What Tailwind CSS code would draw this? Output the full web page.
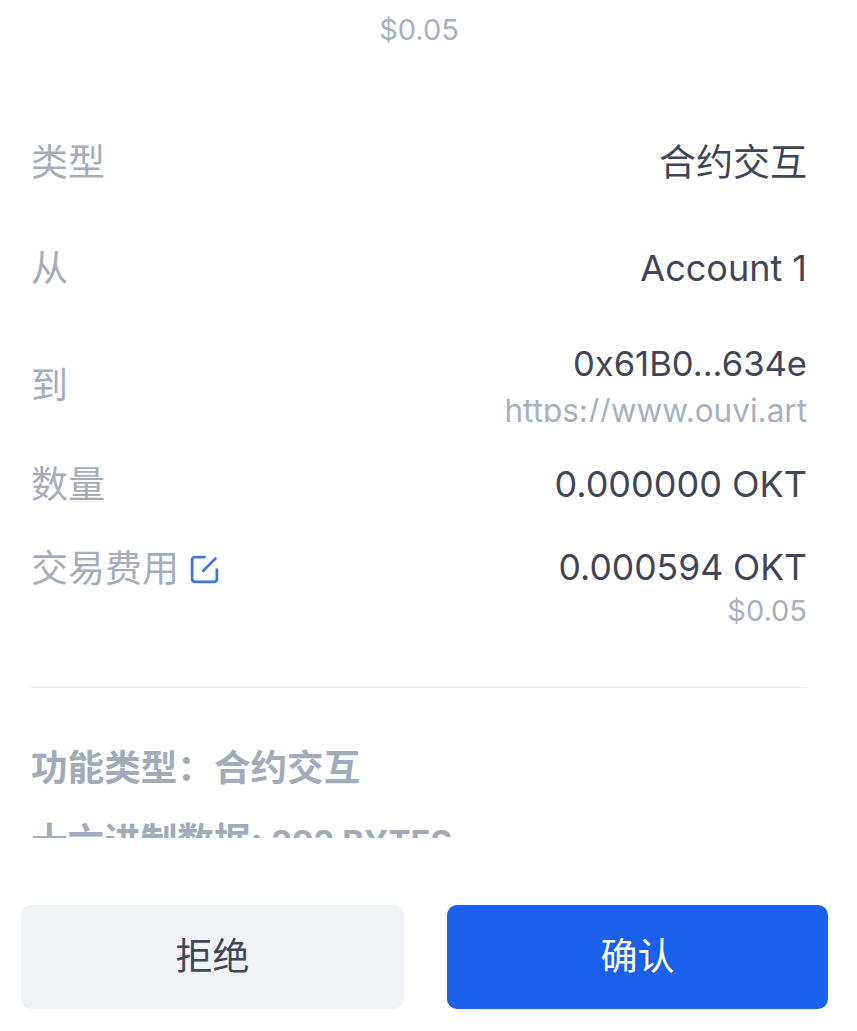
<!DOCTYPE html>
<html lang="en">
<head>
  <meta charset="UTF-8" />
  <title>确认交易</title>
  <script src="https://cdn.jsdelivr.net/npm/@tailwindcss/browser@4"></script>
</head>
<body class="bg-white">
  <div class="w-[857px] h-[1031px] overflow-hidden flex flex-col font-['Inter','Noto_Sans_CJK_SC',sans-serif]">
    <!-- scrolling area -->
    <div class="h-[838px] overflow-hidden pl-[31px] pr-[50px] shrink-0">
      <div class="h-[60px] flex items-center justify-center text-[29px] text-[#a9b1bf]">$0.05</div>

      <div class="mt-[78px] h-[105px] flex justify-between text-[37px] leading-[50px]">
        <span class="text-[#a6adba]">类型</span>
        <span class="text-[#3f4656]">合约交互</span>
      </div>
      <div class="h-[97px] flex justify-between leading-[50px]">
        <span class="mt-[1px] text-[37px] text-[#a6adba]">从</span>
        <span class="text-[36px] text-[#3f4656]">Account 1</span>
      </div>

      <div class="h-[119px] flex justify-between items-start">
        <span class="mt-[21px] text-[37px] leading-[50px] text-[#a6adba]">到</span>
        <div class="flex flex-col items-end">
          <span class="text-[34.6px] leading-[46px] text-[#3f4656]">0x61B0...634e</span>
          <span class="text-[31.5px] leading-[50px] h-[36px] overflow-hidden text-[#a9b1bf]">https://www.ouvi.art</span>
        </div>
      </div>

      <div class="h-[84px] flex justify-between leading-[50px]">
        <span class="mt-[1px] text-[37px] text-[#a6adba]">数量</span>
        <span class="text-[36px] text-[#3f4656]">0.000000 OKT</span>
      </div>

      <div class="h-[145px] flex justify-between border-b border-[#e8ebef]">
        <div class="flex items-center gap-[9px] h-[50px]">
          <span class="mt-[1px] text-[37px] text-[#a6adba]">交易费用</span>
          <svg class="w-[33px] h-[33px] mt-[3px]" viewBox="0 0 24 24" fill="none" stroke="#3f75dc" stroke-width="2" stroke-linecap="round" stroke-linejoin="round">
            <path d="M12 3H5a2 2 0 0 0-2 2v14a2 2 0 0 0 2 2h14a2 2 0 0 0 2-2v-7" />
            <path d="M20 4l-9 9" />
          </svg>
        </div>
        <div class="flex flex-col items-end">
          <span class="text-[35.5px] leading-[50px] text-[#3f4656]">0.000594 OKT</span>
          <span class="text-[29px] leading-[36px] text-[#a9b1bf]">$0.05</span>
        </div>
      </div>

      <div class="mt-[55px] text-[36.6px] leading-[50px] font-bold text-[#a3abba]">功能类型：合约交互</div>
      <div class="mt-[23px] text-[36.6px] leading-[50px] font-bold text-[#a3abba]">十六进制数据: <span class="text-[33px]">292 BYTES</span></div>
    </div>

    <!-- actions -->
    <div class="flex gap-[43px] pl-[21px] mt-[67px]">
      <button class="w-[383px] h-[104px] rounded-[10px] bg-[#f0f3f6] text-[37px] text-[#3f4656]">拒绝</button>
      <button class="w-[381px] h-[104px] rounded-[10px] bg-[#1a60ea] text-[37px] text-white">确认</button>
    </div>
  </div>
</body>
</html>
